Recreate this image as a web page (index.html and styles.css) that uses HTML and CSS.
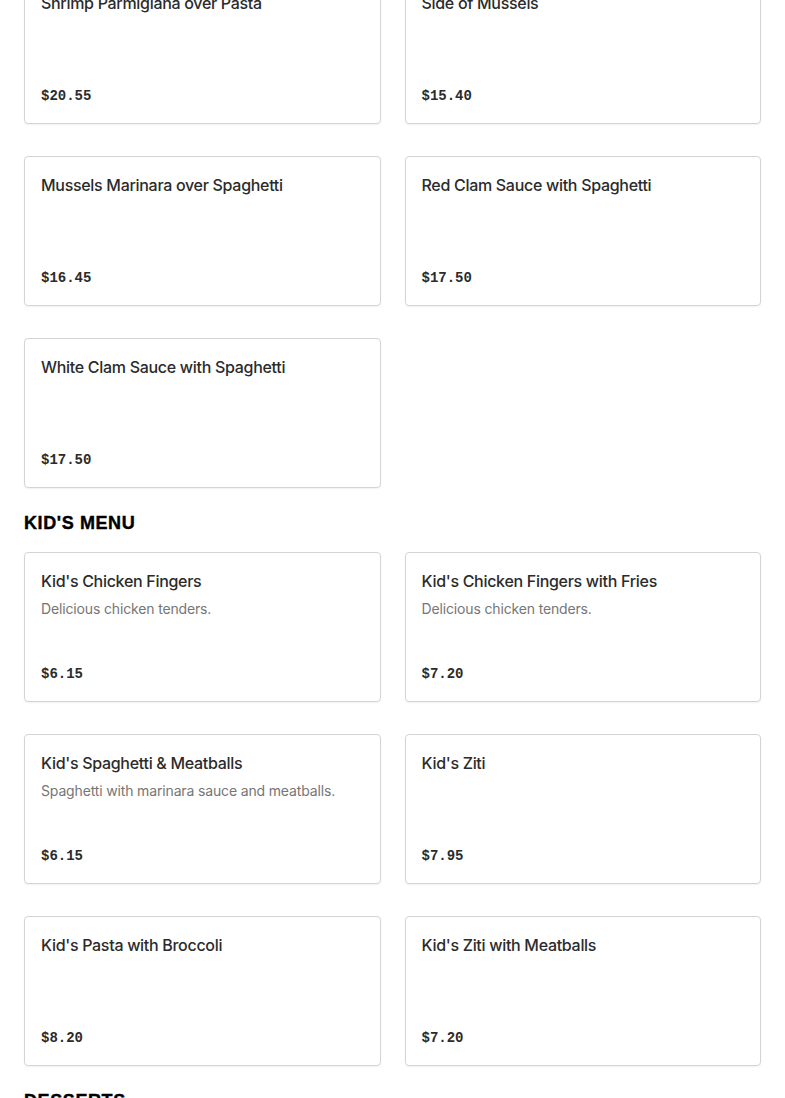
FILE: index.html
```html
<!DOCTYPE html>
<html lang="en">
<head>
<meta charset="utf-8">
<title>Menu</title>
<link rel="stylesheet" href="styles.css">
</head>
<body>
<main class="menu">
  <section class="section">
    <div class="grid">
      <article class="card"><h3 class="title">Shrimp Parmigiana over Pasta</h3><p class="price">$20.55</p></article>
      <article class="card"><h3 class="title">Side of Mussels</h3><p class="price">$15.40</p></article>
      <article class="card"><h3 class="title">Mussels Marinara over Spaghetti</h3><p class="price">$16.45</p></article>
      <article class="card"><h3 class="title">Red Clam Sauce with Spaghetti</h3><p class="price">$17.50</p></article>
      <article class="card"><h3 class="title">White Clam Sauce with Spaghetti</h3><p class="price">$17.50</p></article>
    </div>
  </section>
  <section class="section">
    <h2 class="heading">KID'S MENU</h2>
    <div class="grid">
      <article class="card"><h3 class="title">Kid's Chicken Fingers</h3><p class="desc">Delicious chicken tenders.</p><p class="price">$6.15</p></article>
      <article class="card"><h3 class="title">Kid's Chicken Fingers with Fries</h3><p class="desc">Delicious chicken tenders.</p><p class="price">$7.20</p></article>
      <article class="card"><h3 class="title">Kid's Spaghetti &amp; Meatballs</h3><p class="desc">Spaghetti with marinara sauce and meatballs.</p><p class="price">$6.15</p></article>
      <article class="card"><h3 class="title">Kid's Ziti</h3><p class="price">$7.95</p></article>
      <article class="card"><h3 class="title">Kid's Pasta with Broccoli</h3><p class="price">$8.20</p></article>
      <article class="card"><h3 class="title">Kid's Ziti with Meatballs</h3><p class="price">$7.20</p></article>
    </div>
  </section>
  <section class="section">
    <h2 class="heading">DESSERTS</h2>
  </section>
</main>
</body>
</html>
```
FILE: styles.css
```css
html, body {
  margin: 0;
  padding: 0;
  background: #fff;
}
body {
  font-family: Inter, "Liberation Sans", sans-serif;
  color: #2b2b2b;
  overflow: hidden;
}
.menu {
  margin-top: -26px;
  padding: 0 24px;
}
.heading {
  margin: 23px 0 17px;
  font-family: "Liberation Sans", Arial, sans-serif;
  font-weight: 900;
  font-size: 18px;
  line-height: 24px;
  color: #000;
  letter-spacing: 0.6px;
  -webkit-text-stroke: 0.4px #000;
}
.grid {
  display: grid;
  grid-template-columns: 1fr 1fr;
  column-gap: 24px;
  row-gap: 32px;
}
.card {
  box-sizing: border-box;
  height: 150px;
  border: 1px solid #d4d4d4;
  border-radius: 4px;
  box-shadow: 0 1px 2px rgba(0,0,0,0.06);
  padding: 16px;
  display: flex;
  flex-direction: column;
}
.title {
  margin: 0;
  font-size: 16px;
  line-height: 24px;
  font-weight: 500;
  letter-spacing: -0.3px;
  color: #2b2b2b;
}
.desc {
  margin: 6px 0 0;
  font-size: 14px;
  line-height: 20px;
  letter-spacing: -0.15px;
  color: #767676;
}
.price {
  margin: auto 0 0;
  font-family: "Liberation Mono", "Courier New", monospace;
  font-weight: 700;
  font-size: 14px;
  line-height: 22px;
  color: #2b2b2b;
}
```
